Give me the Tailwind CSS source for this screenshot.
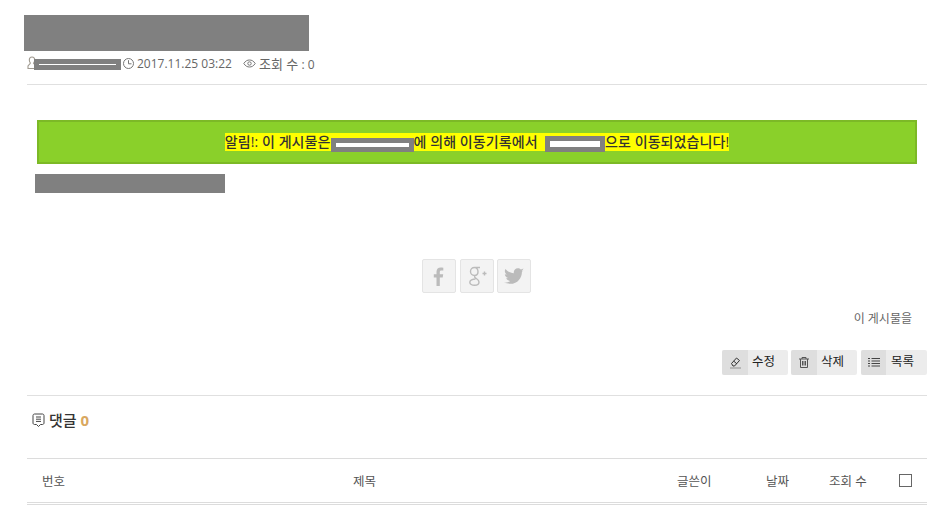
<!DOCTYPE html>
<html lang="ko">
<head>
<meta charset="utf-8">
<script src="https://cdn.jsdelivr.net/npm/@tailwindcss/browser@4"></script>
</head>
<body class="bg-white font-['Open_Sans','Noto_Sans_CJK_KR',sans-serif] text-[12px] text-[#555] overflow-hidden">
<div class="w-[948px] h-[513px] pl-[27px] pr-[21px] overflow-hidden">
  <div class="pt-[15px] -ml-[3px] h-[51px]"><div class="w-[285px] h-[36px] bg-[#808080]"></div></div>
  <div class="h-[34px] border-b border-[#e0e0e0] flex items-start pt-[5px] text-[12px] leading-[16px] text-[#666]">
    <svg class="w-[10px] h-[14px] mt-[0px]" viewBox="0 0 10 14" fill="none" stroke="#a09a90" stroke-width="1.100"><path d="M5 1C6.800 1 7.700 2.300 7.700 4C7.700 5.500 7 6.500 6.500 7.200L8 9H9.500M3.500 7.200C3 6.500 2.300 5.500 2.300 4C2.300 2.300 3.200 1 5 1M3.500 7.200L1 10V12.500H8"/></svg>
    <div class="w-[87px] h-[11px] bg-[#808080] mt-[3px] -ml-[3px] flex items-center pl-[5px] shrink-0"><div class="w-[77px] h-[1px] bg-white"></div></div>
    <svg class="w-[13px] h-[13px] ml-[1px] mt-[1px]" viewBox="0 0 13 13" fill="none" stroke="#777" stroke-width="1"><circle cx="6.500" cy="6.500" r="5"/><path d="M6.500 3.200V6.800H9.500"/></svg>
    <span class="ml-[2px]">2017.11.25 03:22</span>
    <svg class="w-[13px] h-[13px] ml-[11px] mt-[1px]" viewBox="0 0 13 13" fill="none" stroke="#777" stroke-width="1"><path d="M.8 6.500C2.500 3.800 4.400 3 6.500 3S10.500 3.800 12.200 6.500C10.500 9.200 8.600 10 6.500 10S2.500 9.200 .8 6.500Z"/><circle cx="6.500" cy="6.500" r="1.700"/></svg>
    <span class="ml-[3px] text-[13px]">조회 수 <span class="text-[12px]">: 0</span></span>
  </div>

  <div class="mt-[35px] ml-[10px] w-[880px] h-[44px] bg-[#8ad02a] border-2 border-[#7cb926] flex items-center justify-center text-[14px] font-medium tracking-[0.08px] text-[#333] leading-[18px]">
    <div class="flex items-start bg-[#ffff00] h-[18px]">
      <span>알림!: 이 게시물은</span>
      <div class="w-[83px] h-[14px] bg-[#808080] flex items-center pl-[5px] mt-[5px] shrink-0"><div class="w-[73px] h-[4px] bg-white"></div></div>
      <span class="whitespace-pre">에 의해 이동기록에서  </span>
      <div class="w-[60px] h-[16px] bg-[#808080] flex items-center pl-[5px] mt-[3px] shrink-0"><div class="w-[50px] h-[6px] bg-white"></div></div>
      <span>으로 이동되었습니다!</span>
    </div>
  </div>
  <div class="mt-[10px] ml-[8px] w-[190px] h-[19px] bg-[#808080]"></div>

  <div class="mt-[66px] flex justify-center pr-[1px]">
    <div class="w-[34px] h-[34px] rounded-[2px] border border-[#e4e4e4] bg-[#f3f3f3] flex items-center justify-center">
      <svg class="w-[12px] h-[19px]" viewBox="0 0 12 19" fill="#bbb"><path d="M3.500 19V10.500H.8V7.200H3.500V4.800C3.500 2 5.200.5 7.700.5C8.900.5 9.900.6 10.300.7V3.600H8.500C7.100 3.600 6.800 4.300 6.800 5.200V7.200H10.200L9.700 10.500H6.800V19Z"/></svg>
    </div>
    <div class="ml-[4px] w-[34px] h-[34px] rounded-[2px] border border-[#e4e4e4] bg-[#f3f3f3] flex items-center justify-center">
      <svg class="w-[20px] h-[20px]" viewBox="0 0 20 20" fill="none" stroke="#bbb" stroke-width="1.400"><path d="M13 1.500H7.500C5 1.500 3.500 3.500 3.500 5.500C3.500 7.500 5.200 9.500 7.500 9.500C9.700 9.500 11 7.800 11 5.800C11 3.500 9.500 1.500 7.500 1.500M8.300 9.500C7 10.500 7.500 11.300 9.300 12.500C11.300 13.800 12 15 12 16C12 18 10 19.300 7.500 19.300C5 19.300 2.800 18.200 2.800 16.200C2.800 14.300 5.500 13 8.500 13M15.500 7.500H19.500M17.500 5.500V9.500"/></svg>
    </div>
    <div class="ml-[3px] w-[34px] h-[34px] rounded-[2px] border border-[#e4e4e4] bg-[#f3f3f3] flex items-center justify-center">
      <svg class="w-[20px] h-[17px]" viewBox="0 0 24 20" fill="#bbb"><path d="M24 2.400c-.9.400-1.800.700-2.800.800 1-.6 1.800-1.600 2.200-2.700-1 .6-2 1-3.100 1.200C19.300.7 18 .1 16.600.1c-2.700 0-4.900 2.200-4.900 4.900 0 .4 0 .8.100 1.100C7.700 5.900 4.100 4 1.700.9c-.4.700-.7 1.600-.7 2.500 0 1.700.9 3.200 2.200 4.100-.8 0-1.600-.2-2.200-.6v.1c0 2.400 1.700 4.400 3.900 4.800-.4.100-.8.200-1.300.2-.3 0-.6 0-.9-.1.6 2 2.400 3.400 4.600 3.400-1.700 1.300-3.800 2.100-6.100 2.100-.4 0-.8 0-1.200-.1C2.200 18 4.800 18.800 7.500 18.800c9.100 0 14-7.500 14-14v-.6c1-.7 1.800-1.600 2.500-1.800z"/></svg>
    </div>
  </div>

  <div class="mt-[16px] h-[20px] flex justify-end items-center pr-[15px] text-[#666] text-[12px] leading-[20px]">이 게시물을</div>

  <div class="mt-[21px] flex justify-end text-[12.5px] text-[#222]">
    <div class="flex h-[25px] w-[66px] rounded-[2px] bg-[#ececec] overflow-hidden">
      <div class="w-[26px] bg-[#dedede] flex items-center justify-center"><svg class="w-[13px] h-[13px]" viewBox="0 0 13 13" fill="none" stroke="#333"><path d="M2.500 7.500 7.500 2 10.500 4.500 5.500 10H4Z M4.800 5.200 8 8"/><path d="M1 12H12" stroke="#aaa" stroke-width="1.500"/></svg></div>
      <div class="flex-1 flex items-center pl-[4px]">수정</div>
    </div>
    <div class="ml-[3px] flex h-[25px] w-[66px] rounded-[2px] bg-[#ececec] overflow-hidden">
      <div class="w-[26px] bg-[#dedede] flex items-center justify-center"><svg class="w-[12px] h-[12px]" viewBox="0 0 12 12" fill="none" stroke="#555"><path d="M1 2H11M4 2V.5H8V2M2.500 2V10.500H9.500V2M4.500 4V8.500M6 4V8.500M7.500 4V8.500"/></svg></div>
      <div class="flex-1 flex items-center pl-[4px]">삭제</div>
    </div>
    <div class="ml-[4px] flex h-[25px] w-[66px] rounded-[2px] bg-[#ececec] overflow-hidden">
      <div class="w-[25px] bg-[#dedede] flex items-center justify-center"><svg class="w-[12px] h-[11px]" viewBox="0 0 12 11" fill="none" stroke="#444"><path d="M0 1.500H2M3.500 1.500H12M0 4H2M3.500 4H12M0 6.500H2M3.500 6.500H12M0 9H2M3.500 9H12"/></svg></div>
      <div class="flex-1 flex items-center pl-[5px]">목록</div>
    </div>
  </div>

  <div class="mt-[20px] border-t border-[#e0e0e0] h-[63px] flex items-center pl-[5px] pb-[13px] text-[15px] font-medium text-[#333]">
    <svg class="w-[13px] h-[15px] mr-[4px]" viewBox="0 0 13 15" fill="none" stroke="#444"><path d="M2.500 1H10.500C11.300 1 12 1.700 12 2.500V10C12 10.800 11.300 11.500 10.500 11.500H8.500L6.500 13.500 4.500 11.500H2.500C1.700 11.500 1 10.800 1 10V2.500C1 1.700 1.700 1 2.500 1Z M4 4H9M4 6.200H9M4 8.400H9"/></svg>
    <span>댓글</span><span class="ml-[4px] text-[#d9a85f] font-bold">0</span>
  </div>

  <div class="border-t border-[#dcdcdc] h-[45px] border-b flex items-center pt-[4px] text-[12.5px] text-[#555]">
    <div class="w-[15px]"></div>
    <div class="w-[24px]">번호</div>
    <div class="w-[287px]"></div>
    <div class="w-[324px]">제목</div>
    <div class="w-[89px]">글쓴이</div>
    <div class="w-[63px]">날짜</div>
    <div class="w-[70px]">조회 수</div>
    <div class="w-[13px] h-[13px] border border-[#666] -mt-[4px]"></div>
  </div>
  <div class="mt-[1px] border-t border-[#dcdcdc]"></div>
</div>
</body>
</html>
